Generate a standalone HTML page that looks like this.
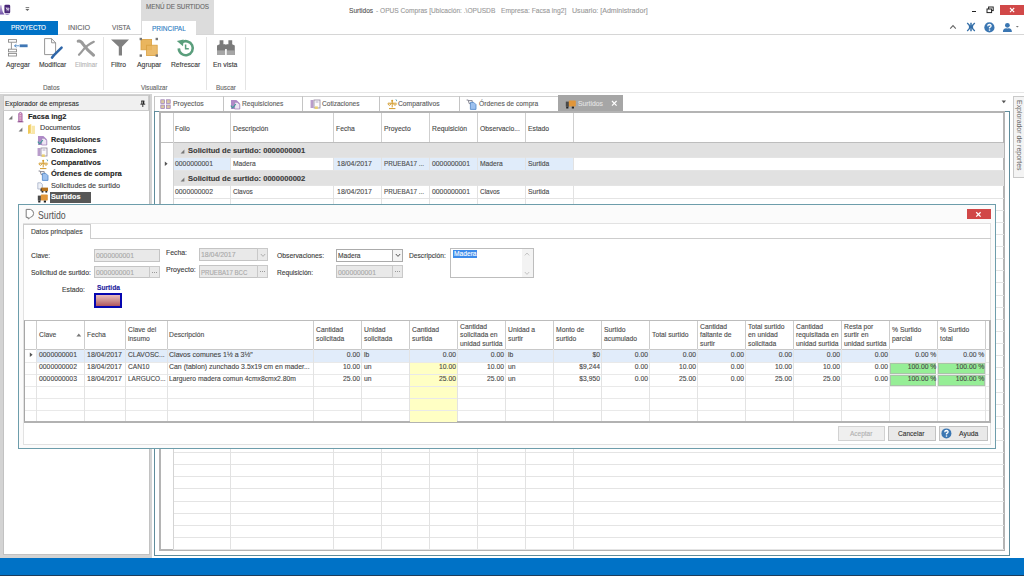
<!DOCTYPE html>
<html lang="es">
<head>
<meta charset="utf-8">
<title>Surtidos - OPUS Compras</title>
<style>
html,body{margin:0;padding:0;}
body{width:1024px;height:576px;overflow:hidden;background:#fff;position:relative;
 font-family:"Liberation Sans","DejaVu Sans",sans-serif;font-size:7.2px;color:#505050;}
.a{position:absolute;}
.t{position:absolute;white-space:nowrap;line-height:10px;height:10px;-webkit-text-stroke:0.12px;}
svg{position:absolute;overflow:visible;}
</style>
</head>
<body>
<div class="a" style="left:141px;top:0px;width:73px;height:34px;background:#dcdcdc;"></div>
<div class="t" style="top:2.27px;font-size:7.3px;color:#6a6a6a;left:146px;transform:scaleX(0.860);transform-origin:0 0;">MENÚ DE SURTIDOS</div>
<div class="t" style="top:5.61px;font-size:7.2px;color:#555;left:349.4px;transform:scaleX(0.916);transform-origin:0 0;">Surtidos</div>
<div class="t" style="top:5.61px;font-size:7.2px;color:#9a9a9a;left:375.6px;transform:scaleX(0.919);transform-origin:0 0;">- OPUS Compras [Ubicación: .\OPUSDB</div>
<div class="t" style="top:5.61px;font-size:7.2px;color:#9a9a9a;left:500.6px;transform:scaleX(0.935);transform-origin:0 0;">Empresa: Facsa ing2]</div>
<div class="t" style="top:5.61px;font-size:7.2px;color:#9a9a9a;left:572px;transform:scaleX(0.982);transform-origin:0 0;">Usuario: [Administrador]</div>
<svg style="left:0px;top:3px" width="12" height="13" viewBox="0 0 12 13"><defs><linearGradient id="lg1" x1="0" y1="0" x2="0" y2="1"><stop offset="0" stop-color="#c9b8e0"/><stop offset="1" stop-color="#6f4fa6"/></linearGradient></defs><path d="M0 2.2H1.6Q1.8 8.6 4.6 11.6H0Z" fill="url(#lg1)"/><rect x="4.4" y="1.7" width="5.8" height="8.4" rx="1.2" fill="#4a2878"/><path d="M4.6 10.4H10Q9.6 11.8 7 11.9Q5.2 11.8 4.6 10.4Z" fill="#9c84c4"/><path d="M5.8 4.8H6.4L6.9 6.6H8.8L9 5.2H6.6M7 7.4V8.2M8.6 7.4V8.2" stroke="#f4eefa" stroke-width="0.8" fill="none"/></svg>
<svg style="left:24px;top:6px" width="8" height="6" viewBox="0 0 8 6"><rect x="1.6" y="1.2" width="3.6" height="0.9" fill="#666"/><path d="M1.4 2.9h4L3.4 5z" fill="#666"/></svg>
<div class="a" style="left:971.5px;top:11px;width:4.5px;height:1.4px;background:#222;"></div>
<svg style="left:986px;top:6px" width="9" height="8" viewBox="0 0 9 8"><rect x="2.6" y="1" width="4.6" height="3.6" fill="none" stroke="#222" stroke-width="1"/><rect x="1" y="3" width="4.6" height="3.6" fill="#fff" stroke="#222" stroke-width="1"/></svg>
<div class="a" style="left:1000px;top:4.5px;width:24px;height:10.5px;background:#d14848;"></div>
<svg style="left:1008.6px;top:6.6px" width="7" height="7" viewBox="0 0 7 7"><path d="M1 1L5.2 5.2M5.2 1L1 5.2" stroke="#fff" stroke-width="1.1" fill="none"/></svg>
<svg style="left:949px;top:23px" width="8" height="7" viewBox="0 0 8 7"><path d="M1.2 5.6L4 2.6L6.8 5.6" stroke="#666" stroke-width="1.1" fill="none"/></svg>
<svg style="left:966px;top:22px" width="10" height="10" viewBox="0 0 10 10"><path d="M5 0.8V9.2M1.2 1Q6.4 5 1.2 9M8.8 1Q3.6 5 8.8 9" stroke="#356fa8" stroke-width="1.5" fill="none"/></svg>
<svg style="left:984px;top:22px" width="11" height="11" viewBox="0 0 11 11"><circle cx="5.4" cy="5.4" r="5.1" fill="#3a76b2"/><path d="M3.7 4.2Q3.8 2.5 5.5 2.5Q7.2 2.6 7.1 4Q7 5 5.5 5.6V6.6" stroke="#fff" stroke-width="1.3" fill="none"/><rect x="4.8" y="7.4" width="1.4" height="1.3" fill="#fff"/></svg>
<svg style="left:1002px;top:22px" width="11" height="11" viewBox="0 0 11 11"><circle cx="5.4" cy="3.3" r="2.4" fill="#3a76b2"/><path d="M0.9 10Q1 5.6 5.4 6.4Q9.8 5.6 9.9 10z" fill="#3a76b2"/></svg>
<svg style="left:1015px;top:25px" width="5" height="4" viewBox="0 0 5 4"><path d="M0.8 1h3L2.3 2.6z" fill="#777"/></svg>
<div class="a" style="left:0px;top:34px;width:1024px;height:1px;background:#d6d6d6;"></div>
<div class="a" style="left:0px;top:20.5px;width:57.6px;height:14.5px;background:#0072c6;"></div>
<div class="a" style="left:141.6px;top:21px;width:54.6px;height:14.2px;background:#fff;"></div>
<div class="t" style="top:22.67px;font-size:7.3px;color:#fff;left:11px;transform:scaleX(0.857);transform-origin:0 0;">PROYECTO</div>
<div class="t" style="top:22.67px;font-size:7.3px;color:#666;left:68px;transform:scaleX(0.986);transform-origin:0 0;">INICIO</div>
<div class="t" style="top:22.67px;font-size:7.3px;color:#666;left:112px;transform:scaleX(0.900);transform-origin:0 0;">VISTA</div>
<div class="t" style="top:23.87px;font-size:7.3px;color:#2b7cc3;left:152px;transform:scaleX(0.890);transform-origin:0 0;">PRINCIPAL</div>
<div class="a" style="left:0px;top:92px;width:1024px;height:1px;background:#e6e6e6;"></div>
<div class="a" style="left:102.8px;top:37px;width:1px;height:53px;background:#e4e4e4;"></div>
<div class="a" style="left:206.4px;top:37px;width:1px;height:53px;background:#e4e4e4;"></div>
<div class="a" style="left:245.2px;top:37px;width:1px;height:53px;background:#e4e4e4;"></div>
<div class="t" style="top:59.81px;font-size:7.2px;color:#3a3a3a;left:6px;transform:scaleX(0.937);transform-origin:0 0;">Agregar</div>
<div class="t" style="top:59.81px;font-size:7.2px;color:#3a3a3a;left:39px;transform:scaleX(0.938);transform-origin:0 0;">Modificar</div>
<div class="t" style="top:59.81px;font-size:7.2px;color:#b4b4b4;left:75px;transform:scaleX(0.854);transform-origin:0 0;">Eliminar</div>
<div class="t" style="top:59.81px;font-size:7.2px;color:#3a3a3a;left:111px;transform:scaleX(0.938);transform-origin:0 0;">Filtro</div>
<div class="t" style="top:59.81px;font-size:7.2px;color:#3a3a3a;left:137.4px;transform:scaleX(0.953);transform-origin:0 0;">Agrupar</div>
<div class="t" style="top:59.81px;font-size:7.2px;color:#3a3a3a;left:171px;transform:scaleX(0.936);transform-origin:0 0;">Refrescar</div>
<div class="t" style="top:59.81px;font-size:7.2px;color:#3a3a3a;left:213.4px;transform:scaleX(0.953);transform-origin:0 0;">En vista</div>
<div class="t" style="top:82.81px;font-size:7.2px;color:#666;left:43px;transform:scaleX(0.883);transform-origin:0 0;">Datos</div>
<div class="t" style="top:82.81px;font-size:7.2px;color:#666;left:141px;transform:scaleX(0.853);transform-origin:0 0;">Visualizar</div>
<div class="t" style="top:82.81px;font-size:7.2px;color:#666;left:215.6px;transform:scaleX(0.884);transform-origin:0 0;">Buscar</div>
<svg style="left:7px;top:38px" width="22" height="20" viewBox="0 0 22 20"><g fill="#fff" stroke="#8a8a8a" stroke-width="0.9"><rect x="1.5" y="1.6" width="8" height="2.6"/><rect x="1.5" y="11.2" width="8" height="2.6"/><rect x="1.5" y="15.4" width="8" height="2.6"/></g><path d="M4.4 4.4V11" stroke="#8a8a8a" stroke-width="0.9"/><rect x="12.6" y="6.4" width="8" height="2.8" fill="#3f77b5"/><path d="M7.4 7.8H12M9.4 6.2L7.6 7.8L9.4 9.4" stroke="#4a86c5" stroke-width="0.9" fill="none"/></svg>
<svg style="left:43px;top:37px" width="20" height="22" viewBox="0 0 20 22"><path d="M1.6 1.6H8.6L12.6 5.8V17.6H1.6Z" fill="#fff" stroke="#8a8a8a" stroke-width="0.9"/><path d="M8.6 1.6V5.8H12.6" fill="none" stroke="#8a8a8a" stroke-width="0.9"/><path d="M18.6 10.6L11 18.2L9 20.6" stroke="#2f66a8" stroke-width="2.5" fill="none" stroke-linecap="round"/></svg>
<svg style="left:76px;top:39px" width="20" height="18" viewBox="0 0 20 18"><path d="M2.2 2.2Q4.6 1.4 7.4 5.6Q11.6 11.6 17.6 16.2" stroke="#9a9a9a" stroke-width="3" fill="none" stroke-linecap="round"/><path d="M17.8 2.8Q11 6 7.4 10.6Q5 13.6 3 15.8" stroke="#9a9a9a" stroke-width="2.2" fill="none" stroke-linecap="round"/></svg>
<svg style="left:110px;top:38px" width="20" height="19" viewBox="0 0 20 19"><path d="M1 1.6H19L12 8.8V17.6H8.8V8.8Z" fill="#808080"/></svg>
<svg style="left:139px;top:37px" width="20" height="21" viewBox="0 0 20 21"><rect x="2" y="2.4" width="10.6" height="10.4" fill="#e9b55e" stroke="#d9a040" stroke-width="0.8"/><rect x="7.6" y="8.2" width="10.6" height="10.4" fill="#e9b55e" stroke="#d9a040" stroke-width="0.8" fill-opacity="0.9"/><g fill="#777"><rect x="0.6" y="0.8" width="2.4" height="2.4"/><rect x="16.6" y="0.8" width="2.4" height="2.4"/><rect x="0.6" y="17.4" width="2.4" height="2.4"/><rect x="16.6" y="17.4" width="2.4" height="2.4"/></g></svg>
<svg style="left:176px;top:39px" width="20" height="19" viewBox="0 0 20 19"><path d="M2.8 9.4A7 7 0 1 0 5.6 3.6" stroke="#5a9e7c" stroke-width="2.6" fill="none"/><path d="M0.8 2L7.6 0.6L7 7.2Z" fill="#5a9e7c"/><path d="M9.6 5.4V9.8H12.8" stroke="#5a9e7c" stroke-width="1.5" fill="none"/></svg>
<svg style="left:216px;top:39px" width="20" height="17" viewBox="0 0 20 17"><g fill="#7a7a7a"><path d="M3.6 1.2H7.4V5.2H9.2V16H1V6.6L3.6 5.2Z"/><path d="M12.4 1.2H16.2V5.2L18.8 6.6V16H10.6V5.2H12.4Z"/><rect x="8.6" y="5.6" width="2.6" height="4.6"/></g><g fill="#a6a6a6"><rect x="1" y="11.4" width="8.2" height="4.6"/><rect x="10.6" y="11.4" width="8.2" height="4.6"/></g><rect x="9.2" y="10.2" width="1.4" height="5.8" fill="#fff"/></svg>
<div class="a" style="left:0px;top:94px;width:151.6px;height:464px;background:#d3d3d3;"></div>
<div class="a" style="left:3px;top:95px;width:147.4px;height:460.4px;background:#fff;border:1px solid #c2c2c2;box-sizing:border-box;"></div>
<div class="a" style="left:3px;top:95px;width:146.4px;height:16px;background:#f0f0f0;border:1px solid #cbcbcb;box-sizing:border-box;"></div>
<div class="t" style="top:98.91px;font-size:7.2px;color:#333;left:5px;transform:scaleX(0.943);transform-origin:0 0;">Explorador de empresas</div>
<svg style="left:139px;top:100px" width="8" height="9" viewBox="0 0 8 9"><path d="M2.2 1H5.4M2.8 1V4M4.8 1V4M1.4 4.2H6.2M3.8 4.2V7" stroke="#222" stroke-width="0.9" fill="none"/><rect x="3.8" y="1.2" width="1.2" height="2.8" fill="#222"/></svg>
<svg style="left:8px;top:115.4px" width="5" height="5" viewBox="0 0 5 5"><path d="M4.4 0.6V4.4H0.6Z" fill="#777"/></svg>
<svg style="left:18px;top:127px" width="5" height="5" viewBox="0 0 5 5"><path d="M4.4 0.6V4.4H0.6Z" fill="#777"/></svg>
<div class="t" style="top:111.67px;font-size:7.3px;color:#1e1e1e;font-weight:bold;left:28px;transform:scaleX(1.018);transform-origin:0 0;">Facsa ing2</div>
<div class="t" style="top:123.07px;font-size:7.3px;color:#3c3c3c;left:40px;transform:scaleX(0.986);transform-origin:0 0;">Documentos</div>
<div class="t" style="top:134.77px;font-size:7.3px;color:#1e1e1e;font-weight:bold;left:51px;transform:scaleX(1.000);transform-origin:0 0;">Requisiciones</div>
<div class="t" style="top:146.47px;font-size:7.3px;color:#1e1e1e;font-weight:bold;left:51px;transform:scaleX(1.011);transform-origin:0 0;">Cotizaciones</div>
<div class="t" style="top:157.77px;font-size:7.3px;color:#1e1e1e;font-weight:bold;left:51px;transform:scaleX(1.027);transform-origin:0 0;">Comparativos</div>
<div class="t" style="top:169.47px;font-size:7.3px;color:#1e1e1e;font-weight:bold;left:51px;transform:scaleX(1.033);transform-origin:0 0;">Órdenes de compra</div>
<div class="t" style="top:180.87px;font-size:7.3px;color:#444;left:51px;transform:scaleX(0.994);transform-origin:0 0;">Solicitudes de surtido</div>
<div class="a" style="left:49.8px;top:192.2px;width:41.2px;height:10.4px;background:#575757;"></div>
<div class="t" style="top:192.47px;font-size:7.3px;color:#fff;font-weight:bold;left:51px;transform:scaleX(1.000);transform-origin:0 0;">Surtidos</div>
<svg style="left:17px;top:111px" width="8" height="12" viewBox="0 0 8 12"><path d="M1.8 10.4V2.4Q3.4 0.4 5 2.4V10.4Z" fill="#e6cfe6" stroke="#9a4f9a" stroke-width="0.9"/><path d="M0.6 10.8H6.4" stroke="#8a4a8a" stroke-width="1"/><path d="M2.4 3.4H4.6M2.4 5.2H4.6M2.4 7H4.6M2.4 8.8H4.6" stroke="#c0508a" stroke-width="0.7"/></svg>
<svg style="left:27px;top:123px" width="10" height="12" viewBox="0 0 10 12"><path d="M1 2.4L4.2 1V10L1 11Z" fill="#efc95a"/><path d="M4.2 2.8H8V11H1L4.2 10Z" fill="#f8e6a8"/><path d="M4.2 1V10" stroke="#fff8dc" stroke-width="0.8"/></svg>
<svg style="left:37.4px;top:135px" width="11" height="11" viewBox="0 0 11 11"><path d="M1 1H6.4L9.8 4.2V10H1Z" fill="#b08ac8"/><path d="M4.6 3.2H7.4L9.8 5.6V10H4.6Z" fill="#eee6f4" stroke="#9a78b4" stroke-width="0.7"/><path d="M0.8 6.6L2.8 8.8L5.8 5" stroke="#3f9c98" stroke-width="1.1" fill="none"/></svg>
<svg style="left:37.4px;top:147.2px" width="11" height="11" viewBox="0 0 11 11"><path d="M1.2 1V9M2.8 1V9" stroke="#8e62ac" stroke-width="0.9"/><rect x="4" y="1" width="6" height="8" fill="#fbfafc" stroke="#8f849c" stroke-width="0.8"/><path d="M5.6 3H8.4" stroke="#9a8ab0" stroke-width="0.7"/><rect x="4.8" y="7.4" width="3" height="2.6" fill="#e8d074"/></svg>
<svg style="left:37.6px;top:158.6px" width="11" height="11" viewBox="0 0 11 11"><path d="M1 4.2H9.4M5.2 1.6V8.4M2 9.6H8.4M0.8 4.6Q2.4 8 4 4.6M6.4 4.6Q8 8 9.6 4.6" stroke="#d29a2a" stroke-width="1" fill="none"/><circle cx="5.2" cy="1.8" r="1" fill="#d29a2a"/><path d="M8.6 0.6Q10.2 0.6 9.4 2.2" stroke="#4a9ab0" stroke-width="0.8" fill="none"/></svg>
<svg style="left:37.6px;top:170.2px" width="11" height="11" viewBox="0 0 11 11"><path d="M0.6 1H2.2L3.2 4.6H6.2V1.6H2.6" stroke="#6a6a78" stroke-width="0.8" fill="none"/><path d="M4.4 3.4H7.8L10 5.6V10.4H4.4Z" fill="#9cc0ee" stroke="#4f86c8" stroke-width="0.8"/></svg>
<svg style="left:37.4px;top:181.6px" width="12" height="11" viewBox="0 0 12 11"><path d="M0.8 0.8H3.8L5.4 2.4V7H0.8Z" fill="#eef1f7" stroke="#a6b0c6" stroke-width="0.8"/><rect x="4" y="5.6" width="7" height="3.6" fill="#b8741c"/><rect x="3.4" y="6.6" width="1.6" height="2.6" fill="#5a4a3a"/><rect x="4.6" y="9" width="1.8" height="1.6" fill="#2a2a2a"/><rect x="8.4" y="9" width="1.8" height="1.6" fill="#2a2a2a"/></svg>
<svg style="left:37.2px;top:192.6px" width="12" height="11" viewBox="0 0 12 11"><rect x="0.8" y="2.6" width="3.2" height="5" fill="#4a4a4a"/><rect x="3.8" y="1.6" width="7" height="6" rx="0.8" fill="#e0963a"/><rect x="1.2" y="7.6" width="2.2" height="1.9" fill="#222"/><rect x="6.8" y="7.6" width="2.2" height="1.9" fill="#222"/></svg>
<div class="a" style="left:1013px;top:96px;width:12px;height:82px;background:#f4f4f4;border:1px solid #c9c9c9;box-sizing:border-box;"></div>
<div class="t" style="left:1024.4px;top:99.6px;font-size:7.2px;color:#686868;-webkit-text-stroke:0;transform-origin:0 0;transform:rotate(90deg) scaleX(0.965);">Explorador de reportes</div>
<svg style="left:1001px;top:100px" width="6" height="4" viewBox="0 0 6 4"><path d="M0.6 0.6H5L2.8 3.2Z" fill="#555"/></svg>
<div class="a" style="left:0px;top:558px;width:1024px;height:18px;background:#0072c6;"></div>
<div class="a" style="left:0px;top:575px;width:1024px;height:1px;background:#1c3d5c;"></div>
<div class="a" style="left:154.4px;top:96px;width:403.6px;height:1px;background:#d0d0d0;"></div>
<div class="a" style="left:154.4px;top:96px;width:1px;height:15.4px;background:#c4c4c4;"></div>
<div class="t" style="top:98.91px;font-size:7.2px;color:#5c5c5c;left:173px;transform:scaleX(0.962);transform-origin:0 0;">Proyectos</div>
<div class="a" style="left:223px;top:96px;width:1px;height:15.4px;background:#c4c4c4;"></div>
<div class="t" style="top:98.91px;font-size:7.2px;color:#5c5c5c;left:242px;transform:scaleX(0.924);transform-origin:0 0;">Requisiciones</div>
<div class="a" style="left:302px;top:96px;width:1px;height:15.4px;background:#c4c4c4;"></div>
<div class="t" style="top:98.91px;font-size:7.2px;color:#5c5c5c;left:321.8px;transform:scaleX(0.912);transform-origin:0 0;">Cotizaciones</div>
<div class="a" style="left:379px;top:96px;width:1px;height:15.4px;background:#c4c4c4;"></div>
<div class="t" style="top:98.91px;font-size:7.2px;color:#5c5c5c;left:398.4px;transform:scaleX(0.937);transform-origin:0 0;">Comparativos</div>
<div class="a" style="left:459.4px;top:96px;width:1px;height:15.4px;background:#c4c4c4;"></div>
<div class="t" style="top:98.91px;font-size:7.2px;color:#5c5c5c;left:478.6px;transform:scaleX(0.934);transform-origin:0 0;">Órdenes de compra</div>
<div class="a" style="left:557.8px;top:95.2px;width:65px;height:17px;background:#a6a6a6;"></div>
<div class="t" style="top:98.71px;font-size:7.2px;color:#e2e2e2;left:577.6px;transform:scaleX(0.947);transform-origin:0 0;">Surtidos</div>
<svg style="left:611px;top:100px" width="7" height="7" viewBox="0 0 7 7"><path d="M1 1L5.6 5.6M5.6 1L1 5.6" stroke="#fff" stroke-width="1.2" fill="none"/></svg>
<svg style="left:160px;top:99px" width="12" height="11" viewBox="0 0 12 11"><g fill="#d8c8a0" stroke="#9a7ab8" stroke-width="0.7"><rect x="0.8" y="0.8" width="3.6" height="3.6"/><rect x="6.6" y="0.8" width="3.6" height="3.6"/><rect x="0.8" y="6" width="3.6" height="3.6"/><rect x="6.6" y="6" width="3.6" height="3.6"/></g></svg>
<svg style="left:230.4px;top:98.8px" width="11" height="11" viewBox="0 0 11 11"><path d="M1 1H6.4L9.8 4.2V10H1Z" fill="#b08ac8"/><path d="M4.6 3.2H7.4L9.8 5.6V10H4.6Z" fill="#eee6f4" stroke="#9a78b4" stroke-width="0.7"/><path d="M0.8 6.6L2.8 8.8L5.8 5" stroke="#3f9c98" stroke-width="1.1" fill="none"/></svg>
<svg style="left:309.6px;top:98.8px" width="11" height="11" viewBox="0 0 11 11"><path d="M1.2 1V9M2.8 1V9" stroke="#8e62ac" stroke-width="0.9"/><rect x="4" y="1" width="6" height="8" fill="#fbfafc" stroke="#8f849c" stroke-width="0.8"/><path d="M5.6 3H8.4" stroke="#9a8ab0" stroke-width="0.7"/><rect x="4.8" y="7.4" width="3" height="2.6" fill="#e8d074"/></svg>
<svg style="left:386.6px;top:98.8px" width="11" height="11" viewBox="0 0 11 11"><path d="M1 4.2H9.4M5.2 1.6V8.4M2 9.6H8.4M0.8 4.6Q2.4 8 4 4.6M6.4 4.6Q8 8 9.6 4.6" stroke="#d29a2a" stroke-width="1" fill="none"/><circle cx="5.2" cy="1.8" r="1" fill="#d29a2a"/><path d="M8.6 0.6Q10.2 0.6 9.4 2.2" stroke="#4a9ab0" stroke-width="0.8" fill="none"/></svg>
<svg style="left:466px;top:98.8px" width="11" height="11" viewBox="0 0 11 11"><path d="M0.6 1H2.2L3.2 4.6H6.2V1.6H2.6" stroke="#6a6a78" stroke-width="0.8" fill="none"/><path d="M4.4 3.4H7.8L10 5.6V10.4H4.4Z" fill="#9cc0ee" stroke="#4f86c8" stroke-width="0.8"/></svg>
<svg style="left:565.4px;top:98.6px" width="12" height="11" viewBox="0 0 12 11"><rect x="0.8" y="2.6" width="3.2" height="5" fill="#4a4a4a"/><rect x="3.8" y="1.6" width="7" height="6" rx="0.8" fill="#e0963a"/><rect x="1.2" y="7.6" width="2.2" height="1.9" fill="#222"/><rect x="6.8" y="7.6" width="2.2" height="1.9" fill="#222"/></svg>
<div class="a" style="left:154px;top:111.2px;width:856.4px;height:445.2px;border:1px solid #5f8c9b;box-sizing:border-box;"></div>
<div class="a" style="left:159.4px;top:111.2px;width:845.8000000000001px;height:439.40000000000003px;background:#fff;border:2px solid #b4b4b4;box-sizing:border-box;"></div>
<div class="a" style="left:161.4px;top:142px;width:842px;height:1px;background:#bdbdbd;"></div>
<div class="a" style="left:172.5px;top:113.4px;width:1px;height:28.6px;background:#cfcfcf;"></div>
<div class="a" style="left:230.2px;top:113.4px;width:1px;height:28.6px;background:#cfcfcf;"></div>
<div class="a" style="left:333.2px;top:113.4px;width:1px;height:28.6px;background:#cfcfcf;"></div>
<div class="a" style="left:381.2px;top:113.4px;width:1px;height:28.6px;background:#cfcfcf;"></div>
<div class="a" style="left:429.2px;top:113.4px;width:1px;height:28.6px;background:#cfcfcf;"></div>
<div class="a" style="left:477.2px;top:113.4px;width:1px;height:28.6px;background:#cfcfcf;"></div>
<div class="a" style="left:525.2px;top:113.4px;width:1px;height:28.6px;background:#cfcfcf;"></div>
<div class="a" style="left:573.4px;top:113.4px;width:1px;height:28.6px;background:#cfcfcf;"></div>
<div class="t" style="top:124.01px;font-size:7.2px;color:#484848;left:175.20000000000002px;transform:scaleX(0.940);transform-origin:0 0;">Folio</div>
<div class="t" style="top:124.01px;font-size:7.2px;color:#484848;left:233.20000000000002px;transform:scaleX(0.940);transform-origin:0 0;">Descripción</div>
<div class="t" style="top:124.01px;font-size:7.2px;color:#484848;left:336.2px;transform:scaleX(0.940);transform-origin:0 0;">Fecha</div>
<div class="t" style="top:124.01px;font-size:7.2px;color:#484848;left:384.2px;transform:scaleX(0.940);transform-origin:0 0;">Proyecto</div>
<div class="t" style="top:124.01px;font-size:7.2px;color:#484848;left:432.2px;transform:scaleX(0.940);transform-origin:0 0;">Requisición</div>
<div class="t" style="top:124.01px;font-size:7.2px;color:#484848;left:480.2px;transform:scaleX(0.940);transform-origin:0 0;">Observacio...</div>
<div class="t" style="top:124.01px;font-size:7.2px;color:#484848;left:528.1999999999999px;transform:scaleX(0.940);transform-origin:0 0;">Estado</div>
<div class="a" style="left:172.5px;top:142.6px;width:831px;height:14.6px;background:#e1e1e1;"></div>
<div class="a" style="left:172.5px;top:170.6px;width:831px;height:14.6px;background:#e1e1e1;"></div>
<svg style="left:180px;top:148.6px" width="5" height="5" viewBox="0 0 5 5"><path d="M4.4 0.6V4.4H0.6Z" fill="#777"/></svg>
<svg style="left:180px;top:176.6px" width="5" height="5" viewBox="0 0 5 5"><path d="M4.4 0.6V4.4H0.6Z" fill="#777"/></svg>
<div class="t" style="top:145.71px;font-size:7.2px;color:#3a3a3a;font-weight:bold;left:188px;transform:scaleX(1.052);transform-origin:0 0;">Solicitud de surtido: 0000000001</div>
<div class="t" style="top:173.71px;font-size:7.2px;color:#3a3a3a;font-weight:bold;left:188px;transform:scaleX(1.052);transform-origin:0 0;">Solicitud de surtido: 0000000002</div>
<div class="a" style="left:172.5px;top:157.2px;width:401px;height:13.2px;background:#e0ecfa;"></div>
<div class="a" style="left:230.2px;top:157.2px;width:103px;height:13.2px;background:#fff;"></div>
<svg style="left:163.6px;top:161px" width="5" height="6" viewBox="0 0 5 6"><path d="M0.8 0.6L3.6 2.8L0.8 5Z" fill="#555"/></svg>
<div class="t" style="top:159.21px;font-size:7.2px;color:#4c4c4c;left:175.4px;transform:scaleX(0.949);transform-origin:0 0;">0000000001</div>
<div class="t" style="top:159.21px;font-size:7.2px;color:#4c4c4c;left:233.4px;transform:scaleX(0.934);transform-origin:0 0;">Madera</div>
<div class="t" style="top:159.21px;font-size:7.2px;color:#4c4c4c;left:336.6px;transform:scaleX(0.971);transform-origin:0 0;">18/04/2017</div>
<div class="t" style="top:159.21px;font-size:7.2px;color:#4c4c4c;left:384.4px;transform:scaleX(0.877);transform-origin:0 0;">PRUEBA17 ...</div>
<div class="t" style="top:159.21px;font-size:7.2px;color:#4c4c4c;left:432.4px;transform:scaleX(0.949);transform-origin:0 0;">0000000001</div>
<div class="t" style="top:159.21px;font-size:7.2px;color:#4c4c4c;left:480.4px;transform:scaleX(0.934);transform-origin:0 0;">Madera</div>
<div class="t" style="top:159.21px;font-size:7.2px;color:#4c4c4c;left:528.4px;transform:scaleX(0.938);transform-origin:0 0;">Surtida</div>
<div class="t" style="top:186.71px;font-size:7.2px;color:#4c4c4c;left:175.4px;transform:scaleX(0.949);transform-origin:0 0;">0000000002</div>
<div class="t" style="top:186.71px;font-size:7.2px;color:#4c4c4c;left:233.4px;transform:scaleX(0.900);transform-origin:0 0;">Clavos</div>
<div class="t" style="top:186.71px;font-size:7.2px;color:#4c4c4c;left:336.6px;transform:scaleX(0.971);transform-origin:0 0;">18/04/2017</div>
<div class="t" style="top:186.71px;font-size:7.2px;color:#4c4c4c;left:384.4px;transform:scaleX(0.877);transform-origin:0 0;">PRUEBA17 ...</div>
<div class="t" style="top:186.71px;font-size:7.2px;color:#4c4c4c;left:432.4px;transform:scaleX(0.949);transform-origin:0 0;">0000000001</div>
<div class="t" style="top:186.71px;font-size:7.2px;color:#4c4c4c;left:480.4px;transform:scaleX(0.900);transform-origin:0 0;">Clavos</div>
<div class="t" style="top:186.71px;font-size:7.2px;color:#4c4c4c;left:528.4px;transform:scaleX(0.938);transform-origin:0 0;">Surtida</div>
<div class="a" style="left:172.5px;top:157.2px;width:831px;height:1px;background:#e4e4e4;"></div>
<div class="a" style="left:172.5px;top:170.4px;width:831px;height:1px;background:#e4e4e4;"></div>
<div class="a" style="left:172.5px;top:185.2px;width:831px;height:1px;background:#e4e4e4;"></div>
<div class="a" style="left:172.5px;top:197.6px;width:831px;height:1px;background:#e4e4e4;"></div>
<div class="a" style="left:172.5px;top:209.72px;width:831px;height:1px;background:#e4e4e4;"></div>
<div class="a" style="left:172.5px;top:221.84px;width:831px;height:1px;background:#e4e4e4;"></div>
<div class="a" style="left:172.5px;top:233.96px;width:831px;height:1px;background:#e4e4e4;"></div>
<div class="a" style="left:172.5px;top:246.08px;width:831px;height:1px;background:#e4e4e4;"></div>
<div class="a" style="left:172.5px;top:258.2px;width:831px;height:1px;background:#e4e4e4;"></div>
<div class="a" style="left:172.5px;top:270.32px;width:831px;height:1px;background:#e4e4e4;"></div>
<div class="a" style="left:172.5px;top:282.44px;width:831px;height:1px;background:#e4e4e4;"></div>
<div class="a" style="left:172.5px;top:294.56px;width:831px;height:1px;background:#e4e4e4;"></div>
<div class="a" style="left:172.5px;top:306.68px;width:831px;height:1px;background:#e4e4e4;"></div>
<div class="a" style="left:172.5px;top:318.8px;width:831px;height:1px;background:#e4e4e4;"></div>
<div class="a" style="left:172.5px;top:330.92px;width:831px;height:1px;background:#e4e4e4;"></div>
<div class="a" style="left:172.5px;top:343.04px;width:831px;height:1px;background:#e4e4e4;"></div>
<div class="a" style="left:172.5px;top:355.16px;width:831px;height:1px;background:#e4e4e4;"></div>
<div class="a" style="left:172.5px;top:367.28px;width:831px;height:1px;background:#e4e4e4;"></div>
<div class="a" style="left:172.5px;top:379.4px;width:831px;height:1px;background:#e4e4e4;"></div>
<div class="a" style="left:172.5px;top:391.52px;width:831px;height:1px;background:#e4e4e4;"></div>
<div class="a" style="left:172.5px;top:403.64px;width:831px;height:1px;background:#e4e4e4;"></div>
<div class="a" style="left:172.5px;top:415.76px;width:831px;height:1px;background:#e4e4e4;"></div>
<div class="a" style="left:172.5px;top:427.88px;width:831px;height:1px;background:#e4e4e4;"></div>
<div class="a" style="left:172.5px;top:440.0px;width:831px;height:1px;background:#e4e4e4;"></div>
<div class="a" style="left:172.5px;top:452.12px;width:831px;height:1px;background:#e4e4e4;"></div>
<div class="a" style="left:172.5px;top:464.24px;width:831px;height:1px;background:#e4e4e4;"></div>
<div class="a" style="left:172.5px;top:476.36px;width:831px;height:1px;background:#e4e4e4;"></div>
<div class="a" style="left:172.5px;top:488.48px;width:831px;height:1px;background:#e4e4e4;"></div>
<div class="a" style="left:172.5px;top:500.6px;width:831px;height:1px;background:#e4e4e4;"></div>
<div class="a" style="left:172.5px;top:512.72px;width:831px;height:1px;background:#e4e4e4;"></div>
<div class="a" style="left:172.5px;top:524.84px;width:831px;height:1px;background:#e4e4e4;"></div>
<div class="a" style="left:172.5px;top:536.96px;width:831px;height:1px;background:#e4e4e4;"></div>
<div class="a" style="left:172.5px;top:549.08px;width:831px;height:1px;background:#e4e4e4;"></div>
<div class="a" style="left:230.2px;top:157.2px;width:1px;height:13.2px;background:#e2e2e2;"></div>
<div class="a" style="left:230.2px;top:185.2px;width:1px;height:364px;background:#e2e2e2;"></div>
<div class="a" style="left:333.2px;top:157.2px;width:1px;height:13.2px;background:#e2e2e2;"></div>
<div class="a" style="left:333.2px;top:185.2px;width:1px;height:364px;background:#e2e2e2;"></div>
<div class="a" style="left:381.2px;top:157.2px;width:1px;height:13.2px;background:#e2e2e2;"></div>
<div class="a" style="left:381.2px;top:185.2px;width:1px;height:364px;background:#e2e2e2;"></div>
<div class="a" style="left:429.2px;top:157.2px;width:1px;height:13.2px;background:#e2e2e2;"></div>
<div class="a" style="left:429.2px;top:185.2px;width:1px;height:364px;background:#e2e2e2;"></div>
<div class="a" style="left:477.2px;top:157.2px;width:1px;height:13.2px;background:#e2e2e2;"></div>
<div class="a" style="left:477.2px;top:185.2px;width:1px;height:364px;background:#e2e2e2;"></div>
<div class="a" style="left:525.2px;top:157.2px;width:1px;height:13.2px;background:#e2e2e2;"></div>
<div class="a" style="left:525.2px;top:185.2px;width:1px;height:364px;background:#e2e2e2;"></div>
<div class="a" style="left:573.4px;top:157.2px;width:1px;height:13.2px;background:#e2e2e2;"></div>
<div class="a" style="left:573.4px;top:185.2px;width:1px;height:364px;background:#e2e2e2;"></div>
<div class="a" style="left:172.5px;top:142px;width:1px;height:407px;background:#d4d4d4;"></div>
<div class="a" style="left:18px;top:204px;width:978px;height:245px;background:#fbfbfb;border:1.3px solid #6d9dab;box-sizing:border-box;"></div>
<svg style="left:25px;top:207.8px" width="10" height="12" viewBox="0 0 10 12"><path d="M1.2 1.4H5.4Q8.6 2.2 8.6 5.4Q8.6 8.6 5.4 9.4L3.2 11V9.4H1.2Z" fill="#fff" stroke="#7c7c7c" stroke-width="1"/></svg>
<div class="t" style="top:209.66px;font-size:10.5px;color:#505050;left:38px;transform:scaleX(0.830);transform-origin:0 0;-webkit-text-stroke:0;">Surtido</div>
<div class="a" style="left:967px;top:208.8px;width:23.6px;height:10.6px;background:#d14848;"></div>
<svg style="left:975px;top:210.6px" width="7" height="7" viewBox="0 0 7 7"><path d="M1.2 1.2L5.6 5.6M5.6 1.2L1.2 5.6" stroke="#fff" stroke-width="1.3" fill="none"/></svg>
<div class="a" style="left:23.4px;top:223.2px;width:967.8px;height:222px;background:#fff;border:1px solid #e2e2e2;box-sizing:border-box;"></div>
<div class="a" style="left:23.4px;top:238.4px;width:967.8px;height:1px;background:#cdcdcd;"></div>
<div class="a" style="left:23.4px;top:224px;width:67.2px;height:15px;background:#fff;border:1px solid #cdcdcd;box-sizing:border-box;border-bottom:none;"></div>
<div class="t" style="top:227.11px;font-size:7.2px;color:#444;left:31px;transform:scaleX(0.938);transform-origin:0 0;">Datos principales</div>
<div class="t" style="top:251.11px;font-size:7.2px;color:#3c3c3c;left:30.8px;transform:scaleX(0.941);transform-origin:0 0;">Clave:</div>
<div class="t" style="top:267.51px;font-size:7.2px;color:#3c3c3c;left:30.8px;transform:scaleX(0.955);transform-origin:0 0;">Solicitud de surtido:</div>
<div class="a" style="left:94.2px;top:249.4px;width:65.60000000000001px;height:12.200000000000017px;background:#e9e9e9;border:1px solid #c4c4c4;box-sizing:border-box;"></div>
<div class="t" style="top:250.91px;font-size:7.2px;color:#a8a8a8;left:96.2px;transform:scaleX(0.949);transform-origin:0 0;">0000000001</div>
<div class="a" style="left:94.2px;top:265.6px;width:65.60000000000001px;height:12.599999999999966px;background:#e9e9e9;border:1px solid #c4c4c4;box-sizing:border-box;"></div>
<div class="a" style="left:149.20000000000002px;top:265.6px;width:10.599999999999994px;height:12.599999999999966px;background:#e9e9e9;border:1px solid #c9c9c9;box-sizing:border-box;"></div>
<div class="a" style="left:152.4px;top:271.5px;width:1px;height:1px;background:#9a9a9a;"></div>
<div class="a" style="left:154.4px;top:271.5px;width:1px;height:1px;background:#9a9a9a;"></div>
<div class="a" style="left:156.4px;top:271.5px;width:1px;height:1px;background:#9a9a9a;"></div>
<div class="t" style="top:267.51px;font-size:7.2px;color:#a8a8a8;left:96.2px;transform:scaleX(0.949);transform-origin:0 0;">0000000001</div>
<div class="t" style="top:247.51px;font-size:7.2px;color:#3c3c3c;left:165.6px;transform:scaleX(0.954);transform-origin:0 0;">Fecha:</div>
<div class="t" style="top:264.51px;font-size:7.2px;color:#3c3c3c;left:165.6px;transform:scaleX(0.980);transform-origin:0 0;">Proyecto:</div>
<div class="a" style="left:199.2px;top:248.2px;width:68.60000000000002px;height:12.600000000000023px;background:#e9e9e9;border:1px solid #c4c4c4;box-sizing:border-box;"></div>
<div class="a" style="left:257.2px;top:248.2px;width:10.600000000000023px;height:12.600000000000023px;background:#e9e9e9;border:1px solid #c9c9c9;box-sizing:border-box;"></div>
<svg style="left:259.8px;top:252.5px" width="6" height="5" viewBox="0 0 6 5"><path d="M0.8 1L3 3.4L5.2 1" stroke="#b0b0b0" stroke-width="1" fill="none"/></svg>
<div class="t" style="top:250.11px;font-size:7.2px;color:#a8a8a8;left:201.2px;transform:scaleX(0.960);transform-origin:0 0;">18/04/2017</div>
<div class="a" style="left:199.2px;top:265.4px;width:68.60000000000002px;height:12.800000000000011px;background:#e9e9e9;border:1px solid #c4c4c4;box-sizing:border-box;"></div>
<div class="a" style="left:257.2px;top:265.4px;width:10.600000000000023px;height:12.800000000000011px;background:#e9e9e9;border:1px solid #c9c9c9;box-sizing:border-box;"></div>
<div class="a" style="left:260.4px;top:271.4px;width:1px;height:1px;background:#9a9a9a;"></div>
<div class="a" style="left:262.4px;top:271.4px;width:1px;height:1px;background:#9a9a9a;"></div>
<div class="a" style="left:264.4px;top:271.4px;width:1px;height:1px;background:#9a9a9a;"></div>
<div class="t" style="top:267.51px;font-size:7.2px;color:#a8a8a8;left:201.2px;transform:scaleX(0.846);transform-origin:0 0;">PRUEBA17 BCC</div>
<div class="t" style="top:250.91px;font-size:7.2px;color:#3c3c3c;left:276.8px;transform:scaleX(0.944);transform-origin:0 0;">Observaciones:</div>
<div class="t" style="top:267.51px;font-size:7.2px;color:#3c3c3c;left:276.8px;transform:scaleX(0.923);transform-origin:0 0;">Requisición:</div>
<div class="a" style="left:336.4px;top:249.2px;width:66.20000000000005px;height:12.400000000000034px;background:#fff;border:1px solid #ababab;box-sizing:border-box;"></div>
<div class="a" style="left:392.0px;top:249.2px;width:10.600000000000023px;height:12.400000000000034px;background:#f4f4f4;border:1px solid #ababab;box-sizing:border-box;"></div>
<svg style="left:394.6px;top:253.4px" width="6" height="5" viewBox="0 0 6 5"><path d="M0.8 1L3 3.4L5.2 1" stroke="#555" stroke-width="1" fill="none"/></svg>
<div class="t" style="top:250.91px;font-size:7.2px;color:#444;left:338.4px;transform:scaleX(0.926);transform-origin:0 0;">Madera</div>
<div class="a" style="left:336.4px;top:265.4px;width:66.20000000000005px;height:12.800000000000011px;background:#e9e9e9;border:1px solid #c4c4c4;box-sizing:border-box;"></div>
<div class="a" style="left:392.0px;top:265.4px;width:10.600000000000023px;height:12.800000000000011px;background:#e9e9e9;border:1px solid #c9c9c9;box-sizing:border-box;"></div>
<div class="a" style="left:395.2px;top:271.4px;width:1px;height:1px;background:#9a9a9a;"></div>
<div class="a" style="left:397.2px;top:271.4px;width:1px;height:1px;background:#9a9a9a;"></div>
<div class="a" style="left:399.2px;top:271.4px;width:1px;height:1px;background:#9a9a9a;"></div>
<div class="t" style="top:267.51px;font-size:7.2px;color:#a8a8a8;left:338.4px;transform:scaleX(0.949);transform-origin:0 0;">0000000001</div>
<div class="t" style="top:250.91px;font-size:7.2px;color:#3c3c3c;left:409.2px;transform:scaleX(0.929);transform-origin:0 0;">Descripción:</div>
<div class="a" style="left:450.4px;top:248px;width:83.4px;height:30.2px;background:#fff;border:1px solid #bdbdbd;box-sizing:border-box;"></div>
<div class="a" style="left:522px;top:249px;width:10.8px;height:28.2px;background:#f3f3f3;"></div>
<div class="a" style="left:453.4px;top:249.8px;width:24px;height:8.2px;background:#3d8bea;"></div>
<div class="t" style="top:249.31px;font-size:7.2px;color:#fff;left:454px;transform:scaleX(0.926);transform-origin:0 0;">Madera</div>
<svg style="left:524.4px;top:251.6px" width="6" height="5" viewBox="0 0 6 5"><path d="M0.8 3.4L3 1L5.2 3.4" stroke="#c4c4c4" stroke-width="1" fill="none"/></svg>
<svg style="left:524.4px;top:270.6px" width="6" height="5" viewBox="0 0 6 5"><path d="M0.8 1L3 3.4L5.2 1" stroke="#c4c4c4" stroke-width="1" fill="none"/></svg>
<div class="t" style="top:284.71px;font-size:7.2px;color:#3c3c3c;left:62.4px;transform:scaleX(0.942);transform-origin:0 0;">Estado:</div>
<div class="t" style="top:282.51px;font-size:7.2px;color:#1c1c9c;font-weight:bold;left:97.2px;transform:scaleX(0.927);transform-origin:0 0;">Surtida</div>
<div class="a" style="left:94.2px;top:293.2px;width:27.6px;height:14.6px;border:2px solid #0606b0;box-sizing:border-box;background:linear-gradient(#e9bcbc,#c98a8c 55%,#b0555f);"></div>
<div class="a" style="left:23.8px;top:319.8px;width:966.8000000000001px;height:103.59999999999997px;background:#fff;border:1px solid #bcbcbc;border-left-color:#a6a6a6;border-right:2px solid #b2b2b2;border-bottom:2px solid #b2b2b2;box-sizing:border-box;"></div>
<div class="a" style="left:36.4px;top:349.4px;width:949.4px;height:12.2px;background:#e1ecfa;"></div>
<div class="a" style="left:410px;top:361.8px;width:47.4px;height:59.8px;background:#ffffc4;"></div>
<div class="a" style="left:24.8px;top:349px;width:964px;height:1px;background:#c8c8c8;"></div>
<div class="a" style="left:24.8px;top:361.6px;width:964px;height:1px;background:#e9e9e9;"></div>
<div class="a" style="left:24.8px;top:373.6px;width:964px;height:1px;background:#e9e9e9;"></div>
<div class="a" style="left:24.8px;top:385.6px;width:964px;height:1px;background:#e9e9e9;"></div>
<div class="a" style="left:24.8px;top:397.6px;width:964px;height:1px;background:#e9e9e9;"></div>
<div class="a" style="left:24.8px;top:409.6px;width:964px;height:1px;background:#e9e9e9;"></div>
<div class="a" style="left:36.2px;top:320.8px;width:1px;height:100.6px;background:#e3e3e3;"></div>
<div class="a" style="left:84.2px;top:320.8px;width:1px;height:100.6px;background:#e3e3e3;"></div>
<div class="a" style="left:125.2px;top:320.8px;width:1px;height:100.6px;background:#e3e3e3;"></div>
<div class="a" style="left:167px;top:320.8px;width:1px;height:100.6px;background:#e3e3e3;"></div>
<div class="a" style="left:313.1px;top:320.8px;width:1px;height:100.6px;background:#e3e3e3;"></div>
<div class="a" style="left:361.1px;top:320.8px;width:1px;height:100.6px;background:#e3e3e3;"></div>
<div class="a" style="left:409.1px;top:320.8px;width:1px;height:100.6px;background:#e3e3e3;"></div>
<div class="a" style="left:457.1px;top:320.8px;width:1px;height:100.6px;background:#e3e3e3;"></div>
<div class="a" style="left:505.1px;top:320.8px;width:1px;height:100.6px;background:#e3e3e3;"></div>
<div class="a" style="left:553.1px;top:320.8px;width:1px;height:100.6px;background:#e3e3e3;"></div>
<div class="a" style="left:601.1px;top:320.8px;width:1px;height:100.6px;background:#e3e3e3;"></div>
<div class="a" style="left:649.1px;top:320.8px;width:1px;height:100.6px;background:#e3e3e3;"></div>
<div class="a" style="left:697.1px;top:320.8px;width:1px;height:100.6px;background:#e3e3e3;"></div>
<div class="a" style="left:745.1px;top:320.8px;width:1px;height:100.6px;background:#e3e3e3;"></div>
<div class="a" style="left:793.1px;top:320.8px;width:1px;height:100.6px;background:#e3e3e3;"></div>
<div class="a" style="left:841.1px;top:320.8px;width:1px;height:100.6px;background:#e3e3e3;"></div>
<div class="a" style="left:889.1px;top:320.8px;width:1px;height:100.6px;background:#e3e3e3;"></div>
<div class="a" style="left:937.1px;top:320.8px;width:1px;height:100.6px;background:#e3e3e3;"></div>
<div class="a" style="left:985.4px;top:320.8px;width:1px;height:100.6px;background:#e3e3e3;"></div>
<div class="a" style="left:36.2px;top:320.8px;width:1px;height:28.2px;background:#cdcdcd;"></div>
<div class="a" style="left:84.2px;top:320.8px;width:1px;height:28.2px;background:#cdcdcd;"></div>
<div class="a" style="left:125.2px;top:320.8px;width:1px;height:28.2px;background:#cdcdcd;"></div>
<div class="a" style="left:167px;top:320.8px;width:1px;height:28.2px;background:#cdcdcd;"></div>
<div class="a" style="left:313.1px;top:320.8px;width:1px;height:28.2px;background:#cdcdcd;"></div>
<div class="a" style="left:361.1px;top:320.8px;width:1px;height:28.2px;background:#cdcdcd;"></div>
<div class="a" style="left:409.1px;top:320.8px;width:1px;height:28.2px;background:#cdcdcd;"></div>
<div class="a" style="left:457.1px;top:320.8px;width:1px;height:28.2px;background:#cdcdcd;"></div>
<div class="a" style="left:505.1px;top:320.8px;width:1px;height:28.2px;background:#cdcdcd;"></div>
<div class="a" style="left:553.1px;top:320.8px;width:1px;height:28.2px;background:#cdcdcd;"></div>
<div class="a" style="left:601.1px;top:320.8px;width:1px;height:28.2px;background:#cdcdcd;"></div>
<div class="a" style="left:649.1px;top:320.8px;width:1px;height:28.2px;background:#cdcdcd;"></div>
<div class="a" style="left:697.1px;top:320.8px;width:1px;height:28.2px;background:#cdcdcd;"></div>
<div class="a" style="left:745.1px;top:320.8px;width:1px;height:28.2px;background:#cdcdcd;"></div>
<div class="a" style="left:793.1px;top:320.8px;width:1px;height:28.2px;background:#cdcdcd;"></div>
<div class="a" style="left:841.1px;top:320.8px;width:1px;height:28.2px;background:#cdcdcd;"></div>
<div class="a" style="left:889.1px;top:320.8px;width:1px;height:28.2px;background:#cdcdcd;"></div>
<div class="a" style="left:937.1px;top:320.8px;width:1px;height:28.2px;background:#cdcdcd;"></div>
<div class="a" style="left:985.4px;top:320.8px;width:1px;height:28.2px;background:#cdcdcd;"></div>
<svg style="left:29.2px;top:352.2px" width="5" height="6" viewBox="0 0 5 6"><path d="M0.8 0.6L3.6 2.8L0.8 5Z" fill="#555"/></svg>
<svg style="left:76px;top:332.6px" width="6" height="4" viewBox="0 0 6 4"><path d="M0.4 3.4H5.2L2.8 0.6Z" fill="#777"/></svg>
<div class="t" style="top:329.91px;font-size:7.2px;color:#4c4c4c;left:38.6px;transform:scaleX(0.940);transform-origin:0 0;">Clave</div>
<div class="t" style="top:329.91px;font-size:7.2px;color:#4c4c4c;left:86.60000000000001px;transform:scaleX(0.940);transform-origin:0 0;">Fecha</div>
<div class="t" style="top:325.41px;font-size:7.2px;color:#4c4c4c;left:127.60000000000001px;transform:scaleX(0.940);transform-origin:0 0;">Clave del</div>
<div class="t" style="top:334.01px;font-size:7.2px;color:#4c4c4c;left:127.60000000000001px;transform:scaleX(0.940);transform-origin:0 0;">insumo</div>
<div class="t" style="top:329.91px;font-size:7.2px;color:#4c4c4c;left:169.4px;transform:scaleX(0.940);transform-origin:0 0;">Descripción</div>
<div class="t" style="top:325.41px;font-size:7.2px;color:#4c4c4c;left:315.5px;transform:scaleX(0.940);transform-origin:0 0;">Cantidad</div>
<div class="t" style="top:334.01px;font-size:7.2px;color:#4c4c4c;left:315.5px;transform:scaleX(0.940);transform-origin:0 0;">solicitada</div>
<div class="t" style="top:325.41px;font-size:7.2px;color:#4c4c4c;left:363.5px;transform:scaleX(0.940);transform-origin:0 0;">Unidad</div>
<div class="t" style="top:334.01px;font-size:7.2px;color:#4c4c4c;left:363.5px;transform:scaleX(0.940);transform-origin:0 0;">solicitada</div>
<div class="t" style="top:325.41px;font-size:7.2px;color:#4c4c4c;left:411.5px;transform:scaleX(0.940);transform-origin:0 0;">Cantidad</div>
<div class="t" style="top:334.01px;font-size:7.2px;color:#4c4c4c;left:411.5px;transform:scaleX(0.940);transform-origin:0 0;">surtida</div>
<div class="t" style="top:321.91px;font-size:7.2px;color:#4c4c4c;left:459.5px;transform:scaleX(0.940);transform-origin:0 0;">Cantidad</div>
<div class="t" style="top:330.31px;font-size:7.2px;color:#4c4c4c;left:459.5px;transform:scaleX(0.940);transform-origin:0 0;">solicitada en</div>
<div class="t" style="top:338.61px;font-size:7.2px;color:#4c4c4c;left:459.5px;transform:scaleX(0.940);transform-origin:0 0;">unidad surtida</div>
<div class="t" style="top:325.41px;font-size:7.2px;color:#4c4c4c;left:507.5px;transform:scaleX(0.940);transform-origin:0 0;">Unidad a</div>
<div class="t" style="top:334.01px;font-size:7.2px;color:#4c4c4c;left:507.5px;transform:scaleX(0.940);transform-origin:0 0;">surtir</div>
<div class="t" style="top:325.41px;font-size:7.2px;color:#4c4c4c;left:555.5px;transform:scaleX(0.940);transform-origin:0 0;">Monto de</div>
<div class="t" style="top:334.01px;font-size:7.2px;color:#4c4c4c;left:555.5px;transform:scaleX(0.940);transform-origin:0 0;">surtido</div>
<div class="t" style="top:325.41px;font-size:7.2px;color:#4c4c4c;left:603.5px;transform:scaleX(0.940);transform-origin:0 0;">Surtido</div>
<div class="t" style="top:334.01px;font-size:7.2px;color:#4c4c4c;left:603.5px;transform:scaleX(0.940);transform-origin:0 0;">acumulado</div>
<div class="t" style="top:329.91px;font-size:7.2px;color:#4c4c4c;left:651.5px;transform:scaleX(0.940);transform-origin:0 0;">Total surtido</div>
<div class="t" style="top:321.91px;font-size:7.2px;color:#4c4c4c;left:699.5px;transform:scaleX(0.940);transform-origin:0 0;">Cantidad</div>
<div class="t" style="top:330.31px;font-size:7.2px;color:#4c4c4c;left:699.5px;transform:scaleX(0.940);transform-origin:0 0;">faltante de</div>
<div class="t" style="top:338.61px;font-size:7.2px;color:#4c4c4c;left:699.5px;transform:scaleX(0.940);transform-origin:0 0;">surtir</div>
<div class="t" style="top:321.91px;font-size:7.2px;color:#4c4c4c;left:747.5px;transform:scaleX(0.940);transform-origin:0 0;">Total surtido</div>
<div class="t" style="top:330.31px;font-size:7.2px;color:#4c4c4c;left:747.5px;transform:scaleX(0.940);transform-origin:0 0;">en unidad</div>
<div class="t" style="top:338.61px;font-size:7.2px;color:#4c4c4c;left:747.5px;transform:scaleX(0.940);transform-origin:0 0;">solicitada</div>
<div class="t" style="top:321.91px;font-size:7.2px;color:#4c4c4c;left:795.5px;transform:scaleX(0.940);transform-origin:0 0;">Cantidad</div>
<div class="t" style="top:330.31px;font-size:7.2px;color:#4c4c4c;left:795.5px;transform:scaleX(0.940);transform-origin:0 0;">requisitada en</div>
<div class="t" style="top:338.61px;font-size:7.2px;color:#4c4c4c;left:795.5px;transform:scaleX(0.940);transform-origin:0 0;">unidad surtida</div>
<div class="t" style="top:321.91px;font-size:7.2px;color:#4c4c4c;left:843.5px;transform:scaleX(0.940);transform-origin:0 0;">Resta por</div>
<div class="t" style="top:330.31px;font-size:7.2px;color:#4c4c4c;left:843.5px;transform:scaleX(0.940);transform-origin:0 0;">surtir en</div>
<div class="t" style="top:338.61px;font-size:7.2px;color:#4c4c4c;left:843.5px;transform:scaleX(0.940);transform-origin:0 0;">unidad surtida</div>
<div class="t" style="top:325.41px;font-size:7.2px;color:#4c4c4c;left:891.5px;transform:scaleX(0.940);transform-origin:0 0;">% Surtido</div>
<div class="t" style="top:334.01px;font-size:7.2px;color:#4c4c4c;left:891.5px;transform:scaleX(0.940);transform-origin:0 0;">parcial</div>
<div class="t" style="top:325.41px;font-size:7.2px;color:#4c4c4c;left:939.5px;transform:scaleX(0.940);transform-origin:0 0;">% Surtido</div>
<div class="t" style="top:334.01px;font-size:7.2px;color:#4c4c4c;left:939.5px;transform:scaleX(0.940);transform-origin:0 0;">total</div>
<div class="a" style="left:890.3000000000001px;top:362.6px;width:46.0px;height:11px;background:#96ee96;border:1px solid #a8c4a8;box-sizing:border-box;"></div>
<div class="a" style="left:938.3000000000001px;top:362.6px;width:46.299999999999955px;height:11px;background:#96ee96;border:1px solid #a8c4a8;box-sizing:border-box;"></div>
<div class="a" style="left:890.3000000000001px;top:374.6px;width:46.0px;height:11px;background:#96ee96;border:1px solid #a8c4a8;box-sizing:border-box;"></div>
<div class="a" style="left:938.3000000000001px;top:374.6px;width:46.299999999999955px;height:11px;background:#96ee96;border:1px solid #a8c4a8;box-sizing:border-box;"></div>
<div class="t" style="top:350.21px;font-size:7.2px;color:#484848;left:38.6px;transform:scaleX(0.949);transform-origin:0 0;">0000000001</div>
<div class="t" style="top:350.21px;font-size:7.2px;color:#484848;left:86.60000000000001px;transform:scaleX(0.971);transform-origin:0 0;">18/04/2017</div>
<div class="t" style="top:350.21px;font-size:7.2px;color:#484848;left:127.60000000000001px;transform:scaleX(0.918);transform-origin:0 0;">CLAVOSC...</div>
<div class="t" style="top:350.21px;font-size:7.2px;color:#484848;left:169.4px;transform:scaleX(0.979);transform-origin:0 0;">Clavos comunes 1½ a 3½&quot;</div>
<div class="t" style="top:350.21px;font-size:7.2px;color:#484848;right:664.0999999999999px;transform:scaleX(0.940);transform-origin:100% 0;">0.00</div>
<div class="t" style="top:350.21px;font-size:7.2px;color:#484848;left:363.5px;transform:scaleX(0.940);transform-origin:0 0;">lb</div>
<div class="t" style="top:350.21px;font-size:7.2px;color:#484848;right:568.0999999999999px;transform:scaleX(0.940);transform-origin:100% 0;">0.00</div>
<div class="t" style="top:350.21px;font-size:7.2px;color:#484848;right:520.0999999999999px;transform:scaleX(0.940);transform-origin:100% 0;">0.00</div>
<div class="t" style="top:350.21px;font-size:7.2px;color:#484848;left:507.5px;transform:scaleX(0.940);transform-origin:0 0;">lb</div>
<div class="t" style="top:350.21px;font-size:7.2px;color:#484848;right:424.1px;transform:scaleX(0.940);transform-origin:100% 0;">$0</div>
<div class="t" style="top:350.21px;font-size:7.2px;color:#484848;right:376.1px;transform:scaleX(0.940);transform-origin:100% 0;">0.00</div>
<div class="t" style="top:350.21px;font-size:7.2px;color:#484848;right:328.1px;transform:scaleX(0.940);transform-origin:100% 0;">0.00</div>
<div class="t" style="top:350.21px;font-size:7.2px;color:#484848;right:280.1px;transform:scaleX(0.940);transform-origin:100% 0;">0.00</div>
<div class="t" style="top:350.21px;font-size:7.2px;color:#484848;right:232.10000000000002px;transform:scaleX(0.940);transform-origin:100% 0;">0.00</div>
<div class="t" style="top:350.21px;font-size:7.2px;color:#484848;right:184.10000000000002px;transform:scaleX(0.940);transform-origin:100% 0;">0.00</div>
<div class="t" style="top:350.21px;font-size:7.2px;color:#484848;right:136.10000000000002px;transform:scaleX(0.940);transform-origin:100% 0;">0.00</div>
<div class="t" style="top:350.21px;font-size:7.2px;color:#484848;right:88.10000000000002px;transform:scaleX(0.940);transform-origin:100% 0;">0.00 %</div>
<div class="t" style="top:350.21px;font-size:7.2px;color:#484848;right:39.80000000000007px;transform:scaleX(0.940);transform-origin:100% 0;">0.00 %</div>
<div class="t" style="top:362.21px;font-size:7.2px;color:#484848;left:38.6px;transform:scaleX(0.949);transform-origin:0 0;">0000000002</div>
<div class="t" style="top:362.21px;font-size:7.2px;color:#484848;left:86.60000000000001px;transform:scaleX(0.971);transform-origin:0 0;">18/04/2017</div>
<div class="t" style="top:362.21px;font-size:7.2px;color:#484848;left:127.60000000000001px;transform:scaleX(0.922);transform-origin:0 0;">CAN10</div>
<div class="t" style="top:362.21px;font-size:7.2px;color:#484848;left:169.4px;transform:scaleX(0.965);transform-origin:0 0;">Can (tablon) zunchado 3.5x19 cm en mader...</div>
<div class="t" style="top:362.21px;font-size:7.2px;color:#484848;right:664.0999999999999px;transform:scaleX(0.940);transform-origin:100% 0;">10.00</div>
<div class="t" style="top:362.21px;font-size:7.2px;color:#484848;left:363.5px;transform:scaleX(0.940);transform-origin:0 0;">un</div>
<div class="t" style="top:362.21px;font-size:7.2px;color:#484848;right:568.0999999999999px;transform:scaleX(0.940);transform-origin:100% 0;">10.00</div>
<div class="t" style="top:362.21px;font-size:7.2px;color:#484848;right:520.0999999999999px;transform:scaleX(0.940);transform-origin:100% 0;">10.00</div>
<div class="t" style="top:362.21px;font-size:7.2px;color:#484848;left:507.5px;transform:scaleX(0.940);transform-origin:0 0;">un</div>
<div class="t" style="top:362.21px;font-size:7.2px;color:#484848;right:424.1px;transform:scaleX(0.940);transform-origin:100% 0;">$9,244</div>
<div class="t" style="top:362.21px;font-size:7.2px;color:#484848;right:376.1px;transform:scaleX(0.940);transform-origin:100% 0;">0.00</div>
<div class="t" style="top:362.21px;font-size:7.2px;color:#484848;right:328.1px;transform:scaleX(0.940);transform-origin:100% 0;">10.00</div>
<div class="t" style="top:362.21px;font-size:7.2px;color:#484848;right:280.1px;transform:scaleX(0.940);transform-origin:100% 0;">0.00</div>
<div class="t" style="top:362.21px;font-size:7.2px;color:#484848;right:232.10000000000002px;transform:scaleX(0.940);transform-origin:100% 0;">10.00</div>
<div class="t" style="top:362.21px;font-size:7.2px;color:#484848;right:184.10000000000002px;transform:scaleX(0.940);transform-origin:100% 0;">10.00</div>
<div class="t" style="top:362.21px;font-size:7.2px;color:#484848;right:136.10000000000002px;transform:scaleX(0.940);transform-origin:100% 0;">0.00</div>
<div class="t" style="top:362.21px;font-size:7.2px;color:#484848;right:88.10000000000002px;transform:scaleX(0.940);transform-origin:100% 0;">100.00 %</div>
<div class="t" style="top:362.21px;font-size:7.2px;color:#484848;right:39.80000000000007px;transform:scaleX(0.940);transform-origin:100% 0;">100.00 %</div>
<div class="t" style="top:374.21px;font-size:7.2px;color:#484848;left:38.6px;transform:scaleX(0.949);transform-origin:0 0;">0000000003</div>
<div class="t" style="top:374.21px;font-size:7.2px;color:#484848;left:86.60000000000001px;transform:scaleX(0.971);transform-origin:0 0;">18/04/2017</div>
<div class="t" style="top:374.21px;font-size:7.2px;color:#484848;left:127.60000000000001px;transform:scaleX(0.904);transform-origin:0 0;">LARGUCO...</div>
<div class="t" style="top:374.21px;font-size:7.2px;color:#484848;left:169.4px;transform:scaleX(0.939);transform-origin:0 0;">Larguero madera comun 4cmx8cmx2.80m</div>
<div class="t" style="top:374.21px;font-size:7.2px;color:#484848;right:664.0999999999999px;transform:scaleX(0.940);transform-origin:100% 0;">25.00</div>
<div class="t" style="top:374.21px;font-size:7.2px;color:#484848;left:363.5px;transform:scaleX(0.940);transform-origin:0 0;">un</div>
<div class="t" style="top:374.21px;font-size:7.2px;color:#484848;right:568.0999999999999px;transform:scaleX(0.940);transform-origin:100% 0;">25.00</div>
<div class="t" style="top:374.21px;font-size:7.2px;color:#484848;right:520.0999999999999px;transform:scaleX(0.940);transform-origin:100% 0;">25.00</div>
<div class="t" style="top:374.21px;font-size:7.2px;color:#484848;left:507.5px;transform:scaleX(0.940);transform-origin:0 0;">un</div>
<div class="t" style="top:374.21px;font-size:7.2px;color:#484848;right:424.1px;transform:scaleX(0.940);transform-origin:100% 0;">$3,950</div>
<div class="t" style="top:374.21px;font-size:7.2px;color:#484848;right:376.1px;transform:scaleX(0.940);transform-origin:100% 0;">0.00</div>
<div class="t" style="top:374.21px;font-size:7.2px;color:#484848;right:328.1px;transform:scaleX(0.940);transform-origin:100% 0;">25.00</div>
<div class="t" style="top:374.21px;font-size:7.2px;color:#484848;right:280.1px;transform:scaleX(0.940);transform-origin:100% 0;">0.00</div>
<div class="t" style="top:374.21px;font-size:7.2px;color:#484848;right:232.10000000000002px;transform:scaleX(0.940);transform-origin:100% 0;">25.00</div>
<div class="t" style="top:374.21px;font-size:7.2px;color:#484848;right:184.10000000000002px;transform:scaleX(0.940);transform-origin:100% 0;">25.00</div>
<div class="t" style="top:374.21px;font-size:7.2px;color:#484848;right:136.10000000000002px;transform:scaleX(0.940);transform-origin:100% 0;">0.00</div>
<div class="t" style="top:374.21px;font-size:7.2px;color:#484848;right:88.10000000000002px;transform:scaleX(0.940);transform-origin:100% 0;">100.00 %</div>
<div class="t" style="top:374.21px;font-size:7.2px;color:#484848;right:39.80000000000007px;transform:scaleX(0.940);transform-origin:100% 0;">100.00 %</div>
<div class="a" style="left:838px;top:426.4px;width:46.60000000000002px;height:14.2px;background:#efefef;border:1px solid #d2d2d2;box-sizing:border-box;"></div>
<div class="t" style="top:428.71px;font-size:7.2px;color:#b0b0b0;left:850.4px;transform:scaleX(0.903);transform-origin:0 0;">Aceptar</div>
<div class="a" style="left:888.4px;top:426.4px;width:48.0px;height:14.2px;background:#e9e9e9;border:1px solid #c2c2c2;box-sizing:border-box;"></div>
<div class="t" style="top:428.71px;font-size:7.2px;color:#333;left:898.2px;transform:scaleX(0.916);transform-origin:0 0;">Cancelar</div>
<div class="a" style="left:939.4px;top:426.4px;width:48.39999999999998px;height:14.2px;background:#e9e9e9;border:1px solid #c2c2c2;box-sizing:border-box;"></div>
<div class="t" style="top:428.71px;font-size:7.2px;color:#333;left:959.4px;transform:scaleX(0.956);transform-origin:0 0;">Ayuda</div>
<svg style="left:941px;top:428px" width="11" height="11" viewBox="0 0 11 11"><circle cx="5.4" cy="5.4" r="5" fill="#3a76b2"/><path d="M3.7 4.2Q3.8 2.5 5.5 2.5Q7.2 2.6 7.1 4Q7 5 5.5 5.6V6.6" stroke="#fff" stroke-width="1.3" fill="none"/><rect x="4.8" y="7.4" width="1.4" height="1.3" fill="#fff"/></svg>
</body>
</html>
